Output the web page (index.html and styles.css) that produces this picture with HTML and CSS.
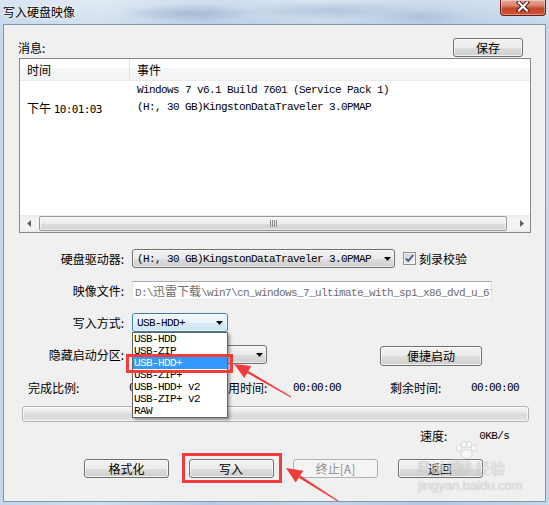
FILE: index.html
```html
<!DOCTYPE html>
<html lang="zh-CN">
<head>
<meta charset="utf-8">
<title>写入硬盘映像</title>
<link rel="stylesheet" href="styles.css">
</head>
<body>
<div class="win">
  <div class="titlebar">
    <span class="title">写入硬盘映像</span>
    <div class="close">
      <svg width="14" height="11" viewBox="0 0 14 11">
        <path d="M3 1.5 L11 9.5 M11 1.5 L3 9.5" stroke="#4a1b14" stroke-width="4.2" stroke-linecap="square"/>
        <path d="M3 1.5 L11 9.5 M11 1.5 L3 9.5" stroke="#ffffff" stroke-width="2.2" stroke-linecap="square"/>
      </svg>
    </div>
  </div>

  <div class="client">
    <div class="msg-head">
      <span class="lbl">消息:</span>
      <button class="btn btn-save">保存</button>
    </div>

    <div class="log">
      <div class="log-head">
        <div class="col1">时间</div>
        <div class="col2">事件</div>
      </div>
      <div class="log-body">
        <div class="log-row">
          <div class="col1"></div>
          <div class="col2 mono">Windows 7 v6.1 Build 7601 (Service Pack 1)</div>
        </div>
        <div class="log-row">
          <div class="col1">下午 <span class="digits">10:01:03</span></div>
          <div class="col2 mono">(H:, 30 GB)KingstonDataTraveler 3.0PMAP</div>
        </div>
      </div>
      <div class="hscroll">
        <div class="sb-btn"><svg width="4" height="7" viewBox="0 0 4 7"><path d="M4 0V7L0 3.5z" fill="#606060"/></svg></div>
        <div class="sb-track">
          <div class="sb-thumb">
            <svg width="7" height="7" viewBox="0 0 7 7"><path d="M0.5 0V7M2.5 0V7M4.5 0V7M6.5 0V7" stroke="#8c8c8c" stroke-width="1"/></svg>
          </div>
        </div>
        <div class="sb-btn"><svg width="4" height="7" viewBox="0 0 4 7"><path d="M0 0V7L4 3.5z" fill="#606060"/></svg></div>
      </div>
    </div>

    <div class="form">
      <div class="flabel">硬盘驱动器:</div>
      <div class="fctl">
        <div class="combo combo-drive">
          <span class="mono">(H:, 30 GB)KingstonDataTraveler 3.0PMAP</span>
          <svg class="arrow" width="7" height="4" viewBox="0 0 7 4"><path d="M0 0H7L3.5 4z" fill="#000"/></svg>
        </div>
        <div class="check">
          <svg width="13" height="13" viewBox="0 0 13 13">
            <defs>
              <linearGradient id="cbg" x1="0" y1="0" x2="1" y2="1">
                <stop offset="0" stop-color="#cbcfd5"/>
                <stop offset="1" stop-color="#f6f6f6"/>
              </linearGradient>
            </defs>
            <rect x="0.5" y="0.5" width="12" height="12" fill="#f4f4f4" stroke="#8e8f8f"/>
            <rect x="2" y="2" width="9" height="9" fill="url(#cbg)"/>
            <path d="M2.8 6.4 L5.2 9 L10.2 3" fill="none" stroke="#3c4f8c" stroke-width="1.8"/>
          </svg>
          <span>刻录校验</span>
        </div>
      </div>

      <div class="flabel">映像文件:</div>
      <div class="fctl">
        <div class="textbox mono">D:\<span class="cjk">迅雷下载</span>\win7\cn_windows_7_ultimate_with_sp1_x86_dvd_u_677486.iso</div>
      </div>

      <div class="flabel">写入方式:</div>
      <div class="fctl">
        <div class="combo combo-mode">
          <span class="mono">USB-HDD+</span>
          <svg class="arrow" width="7" height="4" viewBox="0 0 7 4"><path d="M0 0H7L3.5 4z" fill="#000"/></svg>
          <ul class="dropdown mono">
            <li>USB-HDD</li>
            <li>USB-ZIP</li>
            <li class="sel">USB-HDD+</li>
            <li>USB-ZIP+</li>
            <li>USB-HDD+ v2</li>
            <li>USB-ZIP+ v2</li>
            <li>RAW</li>
          </ul>
        </div>
      </div>

      <div class="flabel">隐藏启动分区:</div>
      <div class="fctl">
        <div class="combo combo-hide">
          <span class="mono"></span>
          <svg class="arrow" width="7" height="4" viewBox="0 0 7 4"><path d="M0 0H7L3.5 4z" fill="#000"/></svg>
        </div>
        <button class="btn btn-quick">便捷启动</button>
      </div>
    </div>

    <div class="stats">
      <span class="st st-l1">完成比例:</span>
      <span class="st st-v1 digits">0%</span>
      <span class="st st-l2">已用时间:</span>
      <span class="st st-v2 digits">00:00:00</span>
      <span class="st st-l3">剩余时间:</span>
      <span class="st digits">00:00:00</span>
    </div>

    <div class="progress"></div>

    <div class="speed">
      <span>速度:</span>
      <span class="speed-v mono">0KB/s</span>
    </div>

    <div class="actions">
      <button class="btn">格式化</button>
      <button class="btn">写入</button>
      <button class="btn btn-disabled">终止[A]</button>
      <button class="btn">返回</button>
    </div>
  </div>

  <div class="watermark">
    <svg class="paw" width="24" height="18" viewBox="0 0 24 18">
      <ellipse cx="5" cy="7" rx="2.6" ry="3.2" />
      <ellipse cx="10" cy="3.5" rx="2.6" ry="3.2" />
      <ellipse cx="15" cy="3.5" rx="2.6" ry="3.2" />
      <ellipse cx="20" cy="7" rx="2.6" ry="3.2" />
      <ellipse cx="12.5" cy="13" rx="5.5" ry="4.5" />
    </svg>
    <div class="wm-line"><span class="wm-bai">Bai</span><span class="wm-du">du</span><span class="wm-jy">经验</span></div>
    <div class="wm-url">jingyan.baidu.com</div>
  </div>

  <svg class="annot" width="549" height="505" viewBox="0 0 549 505">
    <rect x="127.5" y="355.5" width="104" height="16" fill="none" stroke="#f23b3b" stroke-width="3"/>
    <rect x="183.5" y="454.5" width="97" height="27" fill="none" stroke="#f23b3b" stroke-width="3"/>
    <polygon points="234,364 244.3,378.1 251.3,365.9" fill="#f23b3b"/>
    <polygon points="247.15,373.12 290.75,397.43 291.25,396.57 248.45,370.88" fill="#f23b3b"/>
    <polygon points="286,468 295.7,482.5 303.3,470.7" fill="#f23b3b"/>
    <polygon points="298.8,477.7 337.73,501.42 338.27,500.58 300.2,475.5" fill="#f23b3b"/>
  </svg>
</div>
</body>
</html>
```

FILE: styles.css
```css
* { box-sizing: border-box; }
html, body { margin: 0; padding: 0; }
body {
  width: 549px;
  height: 505px;
  overflow: hidden;
  font-family: "Noto Sans CJK SC", "Noto Sans", sans-serif;
  font-size: 12px;
  color: #000;
}

.win {
  position: relative;
  width: 549px;
  height: 505px;
  display: flex;
  flex-direction: column;
  background:
    linear-gradient(180deg, rgba(255,255,255,0.35) 0, rgba(255,255,255,0.05) 24px, rgba(255,255,255,0) 100%),
    radial-gradient(ellipse 70px 9px at 190px 13px, rgba(95,130,175,0.45), rgba(95,130,175,0)),
    radial-gradient(ellipse 90px 9px at 330px 10px, rgba(110,145,185,0.45), rgba(110,145,185,0)),
    radial-gradient(ellipse 50px 8px at 420px 16px, rgba(120,150,190,0.35), rgba(120,150,190,0)),
    linear-gradient(90deg, #c3d6ea 0%, #d1dfee 18%, #b6cbe3 38%, #c6d7ea 58%, #b3c9e1 78%, #c4d7eb 100%);
}

/* title bar */
.titlebar {
  height: 24px;
  display: flex;
  justify-content: space-between;
  align-items: flex-start;
  flex-shrink: 0;
}
.title {
  margin: 5px 0 0 3px;
  line-height: 14px;
  text-shadow: 0 0 6px #fff, 0 0 3px #fff;
}
.close {
  width: 46px;
  height: 16px;
  margin-right: 3px;
  border: 1px solid #5e2219;
  border-top: none;
  border-radius: 0 0 4px 4px;
  background: linear-gradient(180deg, #e9a898 0%, #d9806c 40%, #c5462b 55%, #cf5437 100%);
  box-shadow: inset 0 0 0 1px rgba(255,255,255,0.35);
  display: flex;
  align-items: center;
  justify-content: center;
  padding-bottom: 3px;
}

/* client */
.client {
  flex: 1;
  margin: 0 3px 3px 3px;
  background: #f0f0f0;
  border: 1px solid #8496ad;
  padding: 13px 14px 0 15px;
  display: flex;
  flex-direction: column;
  position: relative;
}

.msg-head {
  height: 19px;
  margin-bottom: 1px;
  display: flex;
  justify-content: space-between;
  align-items: center;
  flex-shrink: 0;
}
.lbl { margin-left: -1px; line-height: 14px; }

.btn {
  font-family: "Noto Sans CJK SC", "Noto Sans", sans-serif;
  font-size: 12px;
  height: 19px;
  width: 85px;
  padding: 0;
  line-height: 16px;
  color: #000;
  border: 1px solid #707070;
  border-radius: 3px;
  background: linear-gradient(180deg, #f2f2f2 0%, #ebebeb 50%, #dddddd 51%, #cfcfcf 100%);
  box-shadow: inset 0 0 0 1px rgba(255,255,255,0.7);
}
.btn-save { width: 70px; margin-right: 8px; }
.btn-disabled {
  color: #8d8d8d;
  border-color: #adb2b5;
  background: #f4f4f4;
  box-shadow: none;
}

/* log list */
.log {
  height: 175px;
  flex-shrink: 0;
  border: 1px solid #828790;
  background: #fff;
  display: flex;
  flex-direction: column;
}
.log-head {
  height: 22px;
  display: flex;
  background: linear-gradient(180deg, #ffffff 0%, #ffffff 42%, #f6f7f8 43%, #f2f3f5 100%);
  border-bottom: 1px solid #eaeaea;
  flex-shrink: 0;
}
.log-head .col1 {
  width: 110px;
  border-right: 1px solid #e2e3e5;
  padding-left: 7px;
  line-height: 21px;
}
.log-head .col2 { padding-left: 7px; line-height: 21px; }
.log-body { flex: 1; padding-top: 1px; }
.log-row {
  display: flex;
  height: 17px;
  line-height: 17px;
  white-space: nowrap;
}
.log-row .col1 { width: 110px; padding-left: 7px; }
.log-row .col2 { padding-left: 7px; }

.mono {
  font-family: "Liberation Mono", monospace;
  font-size: 11px;
  letter-spacing: -0.6px;
}
.digits {
  font-family: "DejaVu Sans Mono", monospace;
  font-size: 11px;
  letter-spacing: -0.62px;
}
.cjk {
  font-family: "Noto Sans CJK SC", sans-serif;
  font-size: 12px;
  letter-spacing: 0;
}

.hscroll {
  height: 17px;
  flex-shrink: 0;
  display: flex;
  background: linear-gradient(180deg, #e8e8e8 0%, #f3f3f3 20%, #f3f3f3 80%, #e9e9e9 100%);
}
.sb-btn {
  width: 17px;
  display: flex;
  align-items: center;
  justify-content: center;
}
.sb-track {
  flex: 1;
  display: flex;
  padding: 1px 6px 1px 2px;
}
.sb-thumb {
  flex: 1;
  border: 1px solid #979797;
  border-radius: 2px;
  background: linear-gradient(180deg, #f5f5f5 0%, #ececec 50%, #dcdcdc 51%, #d2d2d2 100%);
  box-shadow: inset 0 0 0 1px rgba(255,255,255,0.6);
  display: flex;
  align-items: center;
  justify-content: center;
}

/* form */
.form {
  margin-top: 16px;
  display: grid;
  grid-template-columns: 106px 1fr;
  grid-auto-rows: 19px;
  row-gap: 13px;
  column-gap: 7px;
  align-items: center;
  flex-shrink: 0;
}
.flabel {
  text-align: right;
  line-height: 14px;
  white-space: nowrap;
  padding-right: 1px;
}
.fctl {
  display: flex;
  align-items: center;
  height: 19px;
}

.combo {
  position: relative;
  height: 19px;
  border: 1px solid #707070;
  border-radius: 3px;
  background: linear-gradient(180deg, #f2f2f2 0%, #ebebeb 50%, #dddddd 51%, #cfcfcf 100%);
  box-shadow: inset 0 0 0 1px rgba(255,255,255,0.6);
  display: flex;
  align-items: center;
  padding-left: 4px;
  white-space: nowrap;
}
.combo .arrow { margin-left: auto; margin-right: 3px; flex-shrink: 0; }
.combo-drive { width: 263px; }
.combo-mode {
  width: 96px;
  border-color: #3c7fb1;
  background: linear-gradient(180deg, #f3f9fd 0%, #e9f3fa 50%, #d9ebf7 51%, #cfe5f4 100%);
  z-index: 5;
}
.combo-mode .arrow { margin-right: 4px; }
.combo-hide { width: 135px; }

.dropdown {
  position: absolute;
  left: -1px;
  top: 18px;
  width: 96px;
  margin: 0;
  padding: 0;
  list-style: none;
  background: #fff;
  border: 1px solid #646464;
  box-shadow: 2px 2px 3px rgba(0,0,0,0.35);
}
.dropdown li {
  height: 12px;
  line-height: 12px;
  padding-left: 1px;
  white-space: nowrap;
}
.dropdown li.sel { background: #3399ff; color: #fff; }

.check {
  display: flex;
  align-items: center;
  margin-left: 8px;
  gap: 3px;
  line-height: 14px;
}

.textbox {
  width: 360px;
  height: 19px;
  background: #fff;
  border: 1px solid #e3e9ef;
  border-top-color: #abadb3;
  border-left-color: #e2e3ea;
  border-right-color: #dbdfe6;
  color: #6d6d6d;
  padding-left: 2px;
  line-height: 17px;
  white-space: nowrap;
  overflow: hidden;
}

.btn-quick {
  width: 102px;
  height: 20px;
  margin-left: 113px;
  margin-top: 2px;
}

/* stats */
.stats {
  margin-top: 17px;
  margin-left: 9px;
  display: flex;
  align-items: center;
  height: 14px;
  line-height: 14px;
  white-space: nowrap;
  flex-shrink: 0;
}
.st-l1 { width: 101px; }
.st-v1 { width: 87px; }
.st-l2 { width: 77px; }
.st-v2 { width: 97px; }
.st-l3 { width: 81px; }

.progress {
  margin: 11px 0 0 3px;
  width: 507px;
  height: 16px;
  flex-shrink: 0;
  border: 1px solid #b2b2b2;
  border-radius: 3px;
  background: linear-gradient(180deg, #f6f6f6 0%, #e9e9e9 35%, #d9d9d9 55%, #e2e2e2 100%);
  box-shadow: inset 0 0 0 1px rgba(255,255,255,0.7);
}

.speed {
  margin-top: 7px;
  margin-left: 401px;
  display: flex;
  line-height: 14px;
  height: 14px;
  flex-shrink: 0;
}
.speed-v { margin-left: 32px; }

.actions {
  margin-top: 16px;
  margin-left: 65px;
  display: flex;
  gap: 19.5px;
  flex-shrink: 0;
}

/* watermark */
.watermark {
  position: absolute;
  left: 418px;
  top: 441px;
  width: 110px;
  color: rgba(255,255,255,0.55);
  text-shadow: 0 0 1px rgba(90,90,90,0.45);
  pointer-events: none;
  z-index: 8;
}
.paw {
  display: block;
  margin-left: 36px;
  fill: rgba(255,255,255,0.55);
  stroke: rgba(120,120,120,0.35);
  stroke-width: 0.6;
}
.wm-line {
  display: flex;
  align-items: center;
  font-family: "Liberation Sans", sans-serif;
  font-size: 17px;
  line-height: 17px;
  font-weight: bold;
}
.wm-du {
  background: rgba(200,200,200,0.35);
  border-radius: 8px;
  padding: 0 3px;
  margin: 0 2px;
}
.wm-jy {
  font-family: "Noto Sans CJK SC", sans-serif;
  font-size: 15px;
  font-weight: normal;
}
.wm-url {
  font-family: "Liberation Sans", sans-serif;
  font-size: 13px;
  line-height: 16px;
  margin-top: 2px;
}

.annot {
  position: absolute;
  left: 0;
  top: 0;
  pointer-events: none;
  z-index: 10;
}
```
